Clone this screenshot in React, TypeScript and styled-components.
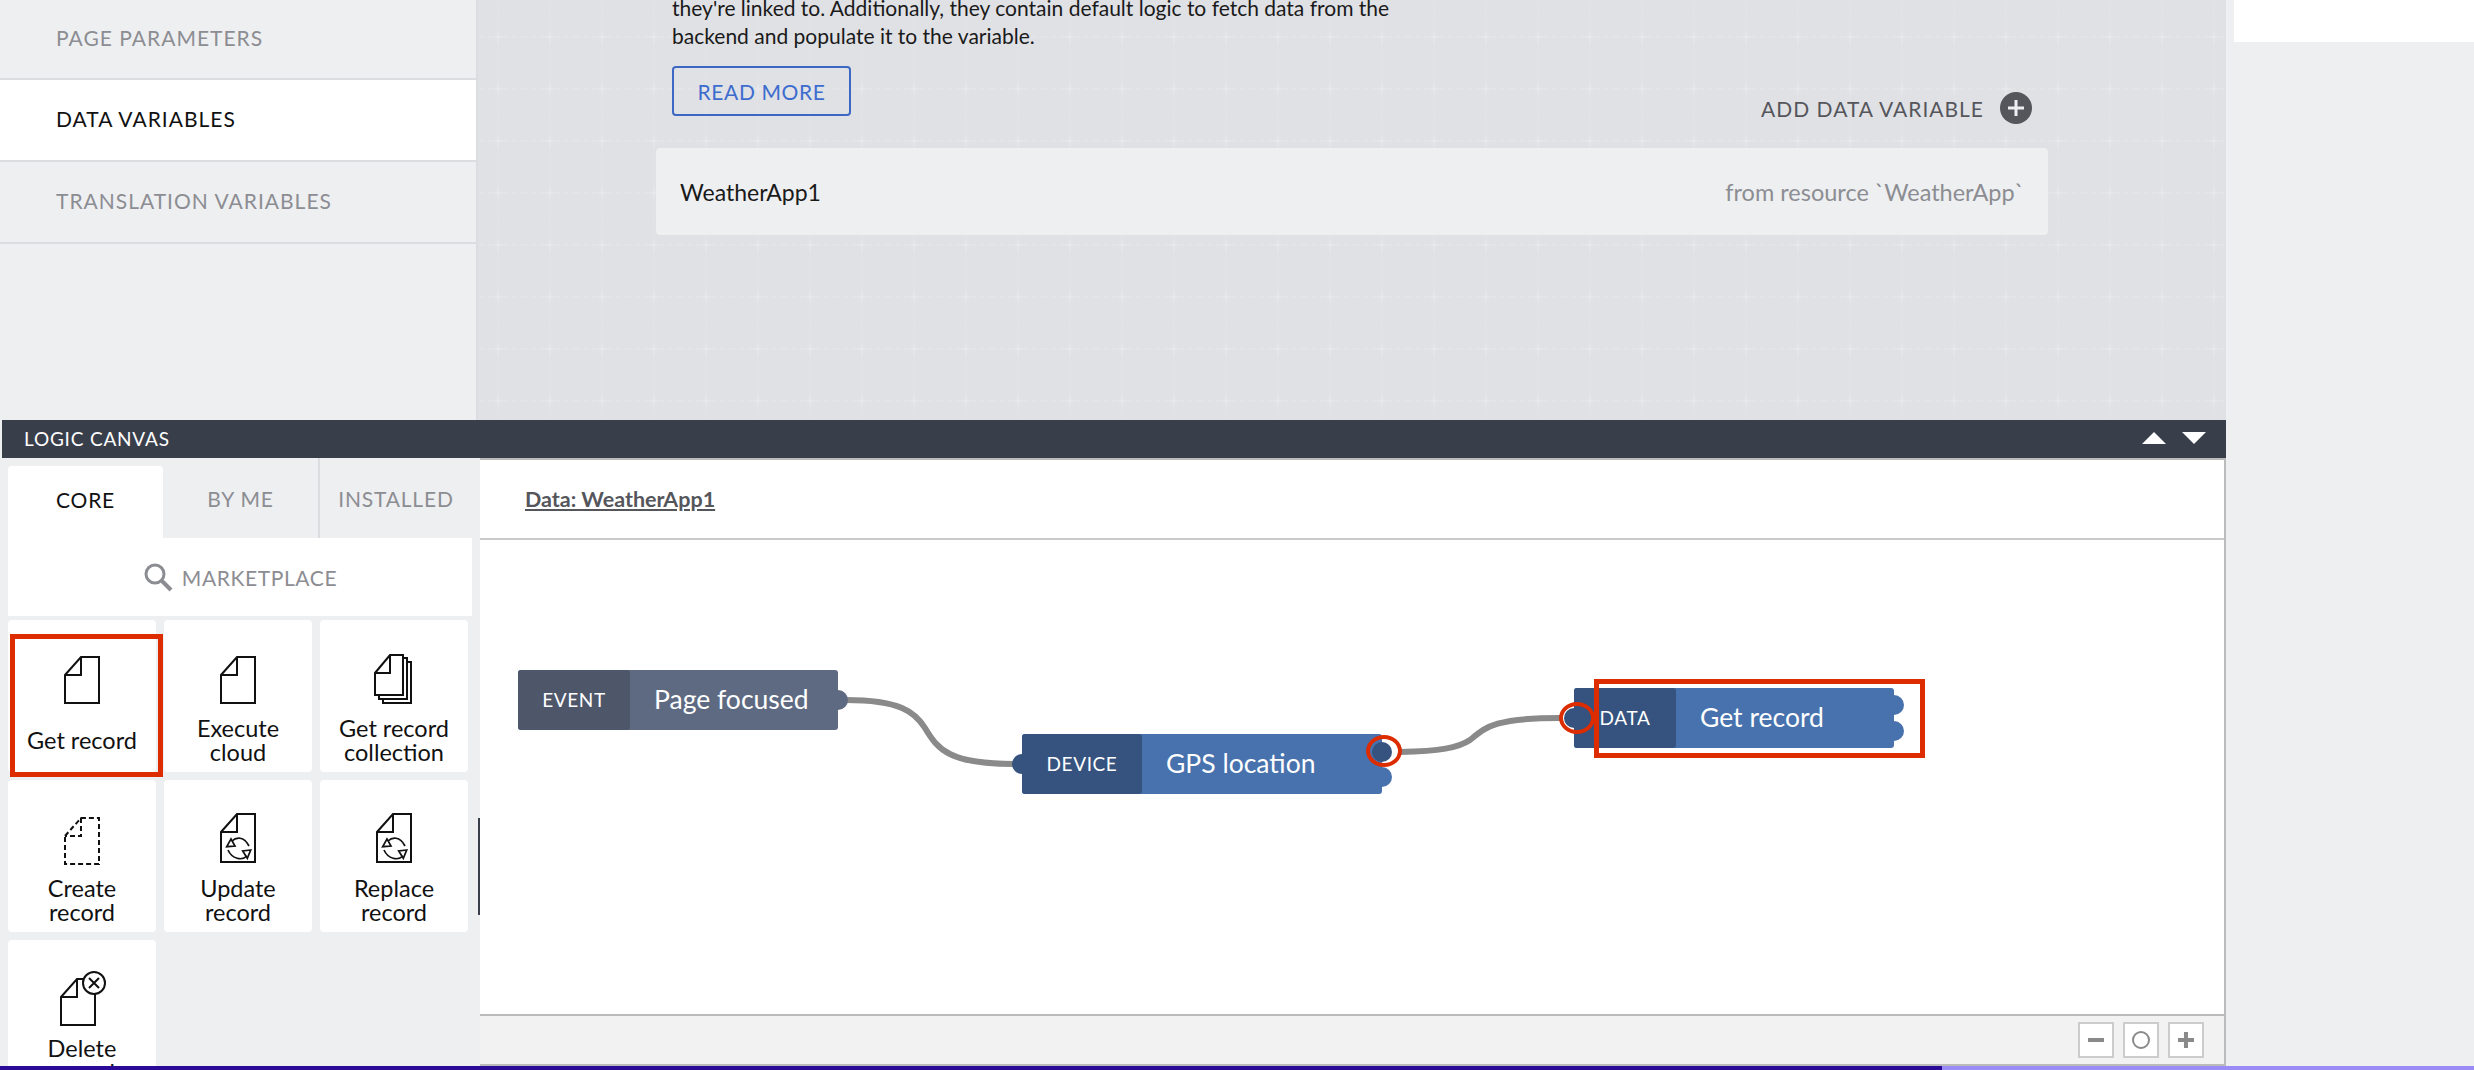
import React from 'react';
import styled, { createGlobalStyle } from 'styled-components';

const GlobalStyle = createGlobalStyle`
  html, body {
    margin: 0;
    padding: 0;
    background: #eeeff1;
    font-family: Lato, "Open Sans", sans-serif;
    overflow: hidden;
  }
`;

const gridTile = encodeURIComponent(
  `<svg xmlns="http://www.w3.org/2000/svg" width="52" height="52">
    <path d="M0 26H52" stroke="#fff" stroke-opacity=".09" stroke-width="2" stroke-dasharray="4 4"/>
    <path d="M26 0V52" stroke="#fff" stroke-opacity=".05" stroke-width="2" stroke-dasharray="4 4"/>
    <path d="M21 26H31M26 21V31" stroke="#fff" stroke-opacity=".16" stroke-width="2"/>
  </svg>`,
);

const Page = styled.div`
  position: relative;
  width: 2474px;
  height: 1070px;
  overflow: hidden;
  display: grid;
  grid-template-columns: 2226px 248px;
  background: #eeeff1;
`;

const Main = styled.div`
  display: flex;
  flex-direction: column;
  height: 1066px;
`;

const Top = styled.div`
  display: flex;
  height: 420px;
  flex: none;
`;

const Sidebar = styled.nav`
  width: 476px;
  flex: none;
  border-right: 2px solid #dcdde0;
  background: #eeeff1;
`;

const SideRow = styled.div<{ $active?: boolean; $h: number }>`
  height: ${p => p.$h}px;
  box-sizing: border-box;
  display: flex;
  align-items: center;
  padding: 0 0 3px 56px;
  border-bottom: 2px solid #dcdde0;
  background: ${p => (p.$active ? '#fff' : 'transparent')};
  color: ${p => (p.$active ? '#111' : '#8c8d92')};
  font-size: 21px;
  letter-spacing: 1px;
`;

const Grid = styled.section`
  flex: 1;
  background-color: #e0e1e5;
  background-image: url("data:image/svg+xml,${gridTile}");
  background-size: 52px 52px;
  background-position: -6px 11px;
  padding-left: 178px;
  overflow: hidden;
`;

const GridInner = styled.div`
  width: 1392px;
  margin-top: -6px;
`;

const Intro = styled.div`
  display: flex;
  justify-content: space-between;
  align-items: flex-end;
  padding: 0 16px;
  height: 130px;
  margin-bottom: 24px;
`;

const Para = styled.p`
  margin: 0;
  width: 740px;
  font-size: 21px;
  line-height: 28px;
  color: #1a1a1a;
`;

const ReadMore = styled.button`
  display: block;
  margin: 16px 0 8px;
  width: 179px;
  height: 50px;
  padding: 0;
  border: 2px solid #3c68c4;
  border-radius: 4px;
  background: transparent;
  color: #3d6ccf;
  font: inherit;
  font-size: 21px;
  letter-spacing: 0.6px;
`;

const AddVar = styled.div`
  display: flex;
  align-items: center;
  gap: 16px;
  color: #55565c;
  font-size: 21px;
  letter-spacing: 1px;
`;

const AddDot = styled.span`
  width: 32px;
  height: 32px;
  border-radius: 50%;
  background: #55565c;
  display: flex;
  align-items: center;
  justify-content: center;
`;

const VarCard = styled.div`
  height: 87px;
  display: flex;
  align-items: center;
  justify-content: space-between;
  padding: 0 24px;
  border-radius: 4px;
  background: #eeeff1;
  font-size: 23px;
  color: #1a1a1a;
`;

const VarSource = styled.span`
  color: #8c8d92;
  font-size: 23.5px;
`;

const Logic = styled.div`
  flex: 1;
  display: flex;
  flex-direction: column;
  min-height: 0;
  padding-left: 2px;
`;

const LogicBar = styled.div`
  height: 38px;
  box-sizing: border-box;
  flex: none;
  display: flex;
  align-items: center;
  justify-content: space-between;
  padding: 0 20px 2px 22px;
  background: #393e4b;
  color: #fff;
  font-size: 19px;
  letter-spacing: 0.8px;
`;

const Arrows = styled.div`
  display: flex;
  gap: 16px;
`;

const Arrow = styled.span<{ $down?: boolean }>`
  width: 0;
  height: 0;
  border-left: 12px solid transparent;
  border-right: 12px solid transparent;
  ${p => (p.$down ? 'border-top: 12px solid #fff;' : 'border-bottom: 12px solid #fff;')}
`;

const LogicBody = styled.div`
  flex: 1;
  display: flex;
  min-height: 0;
  margin-left: -2px;
`;

const Palette = styled.aside`
  position: relative;
  width: 480px;
  flex: none;
  background: #eeeff1;
  overflow: hidden;
`;

const Tabs = styled.div`
  display: grid;
  grid-template-columns: 155px 155px 2px 152px;
  height: 80px;
  margin-left: 8px;
`;

const Tab = styled.div<{ $active?: boolean }>`
  margin-top: ${p => (p.$active ? '8px' : '0')};
  display: flex;
  align-items: center;
  justify-content: center;
  padding-bottom: ${p => (p.$active ? '6px' : '0')};
  border-radius: 4px 4px 0 0;
  background: ${p => (p.$active ? '#fff' : 'transparent')};
  color: ${p => (p.$active ? '#111' : '#8c8d92')};
  font-size: 21px;
  letter-spacing: 0.8px;
`;

const TabDivider = styled.span`
  background: #dcdde0;
`;

const Market = styled.div`
  margin-left: 8px;
  width: 464px;
  height: 78px;
  background: #fff;
  display: flex;
  align-items: center;
  justify-content: center;
  gap: 9px;
  color: #8c8d92;
  font-size: 21px;
  letter-spacing: 0.6px;
`;

const Items = styled.div`
  display: grid;
  grid-template-columns: repeat(3, 148px);
  grid-auto-rows: 152px;
  gap: 8px;
  padding: 4px 0 0 8px;
`;

const Item = styled.div`
  display: flex;
  flex-direction: column;
  align-items: center;
  padding-top: 36px;
  border-radius: 4px;
  background: #fff;
`;

const ItemIcon = styled.svg`
  width: 60px;
  height: 48px;
  flex: none;
  overflow: visible;
  fill: none;
  stroke: #111;
  stroke-width: 2;
`;

const ItemLabel = styled.div`
  margin-top: 12px;
  width: 128px;
  min-height: 48px;
  display: flex;
  align-items: center;
  justify-content: center;
  text-align: center;
  font-size: 23.5px;
  line-height: 24px;
  color: #111;
`;

const ScrollThumb = styled.span`
  position: absolute;
  right: 0;
  top: 360px;
  width: 2px;
  height: 97px;
  background: #393e4b;
`;

const Board = styled.div`
  flex: 1;
  display: flex;
  flex-direction: column;
  border-right: 2px solid #bbb;
  border-top: 2px solid #bbb;
  min-width: 0;
`;

const BoardHead = styled.div`
  height: 78px;
  flex: none;
  display: flex;
  align-items: center;
  padding: 0 0 0 45px;
  background: #fff;
  border-bottom: 2px solid #c9c9c9;
  font-size: 21.5px;
  font-weight: 700;
  color: #55565c;
  text-decoration: underline;
`;

const BoardCanvas = styled.div`
  position: relative;
  flex: 1;
  background: #fff;
`;

const Wires = styled.svg`
  position: absolute;
  left: 0;
  top: 0;
  width: 100%;
  height: 100%;
  fill: none;
  stroke: #8a8a8a;
  stroke-width: 6;
`;

const Node = styled.div<{ $x: number; $y: number; $bg: string }>`
  position: absolute;
  left: ${p => p.$x}px;
  top: ${p => p.$y}px;
  height: 60px;
  display: flex;
  border-radius: 3px;
  background: ${p => p.$bg};
  color: #fff;
`;

const NodeKind = styled.div<{ $bg: string; $w: number }>`
  width: ${p => p.$w}px;
  display: flex;
  align-items: center;
  justify-content: center;
  padding-bottom: 2px;
  box-sizing: border-box;
  border-radius: 3px;
  background: ${p => p.$bg};
  font-size: 19px;
  letter-spacing: 0.6px;
`;

const NodeName = styled.div<{ $w: number }>`
  width: ${p => p.$w}px;
  box-sizing: border-box;
  display: flex;
  align-items: center;
  padding: 0 0 2px 24px;
  font-size: 26.5px;
`;

const Port = styled.span<{ $side: 'left' | 'right'; $y: number; $bg: string }>`
  position: absolute;
  ${p => p.$side}: -10px;
  top: ${p => p.$y - 10}px;
  width: 20px;
  height: 20px;
  border-radius: 50%;
  background: ${p => p.$bg};
`;

const RedBox = styled.div<{ $x: number; $y: number; $w: number; $h: number }>`
  position: absolute;
  left: ${p => p.$x}px;
  top: ${p => p.$y}px;
  width: ${p => p.$w}px;
  height: ${p => p.$h}px;
  box-sizing: border-box;
  border: 5px solid #dd2c00;
  z-index: 3;
`;

const RedRing = styled.div<{ $x: number; $y: number }>`
  position: absolute;
  left: ${p => p.$x - 18}px;
  top: ${p => p.$y - 16}px;
  width: 36px;
  height: 32px;
  box-sizing: border-box;
  border: 4px solid #dd2c00;
  border-radius: 50%;
  z-index: 3;
`;

const BoardFoot = styled.div`
  height: 48px;
  flex: none;
  display: flex;
  align-items: center;
  justify-content: flex-end;
  gap: 9px;
  padding-right: 20px;
  background: #f2f2f2;
  border-top: 2px solid #bbb;
  border-bottom: 2px solid #bbb;
`;

const ZoomBtn = styled.div`
  width: 36px;
  height: 36px;
  box-sizing: border-box;
  border: 2px solid #ccc;
  background: #fff;
  display: flex;
  align-items: center;
  justify-content: center;
`;

const Side = styled.aside`
  background: #eeeff1;
  padding-left: 8px;
`;

const SideWhite = styled.div`
  height: 42px;
  background: #fff;
`;

const Progress = styled.div`
  position: absolute;
  left: 0;
  right: 0;
  bottom: 0;
  height: 4px;
  background: #9a8cf6;
`;

const ProgressFill = styled.div`
  width: 1942px;
  height: 100%;
  background: #2a0a96;
`;

const Doc = () => (
  <>
    <path d="M13 19 29 1H47V47H13Z" />
    <path d="M29 1V19H13" />
  </>
);

const icons: Record<string, React.ReactNode> = {
  get: <Doc />,
  collection: (
    <>
      <path d="M11 17 26-1H39V39H11Z" />
      <path d="M26-1V17H11" />
      <path d="M39 2H43V43H15V39" />
      <path d="M43 6H47V47H19V43" />
    </>
  ),
  create: (
    <g strokeDasharray="5 3" transform="translate(0 1)">
      <Doc />
    </g>
  ),
  sync: (
    <g transform="translate(0 -3)">
      <path d="M13 19 29 1H47V49H13Z" />
      <path d="M29 1V19H13" />
      <g strokeWidth="1.7">
        <path d="M24 28C28 24 36 23 41 33" />
        <path d="M20 37C24 46 34 48 39 43" />
        <path d="M18.7 33.7 23 26 27 33Z" />
        <path d="M42.7 37 34.7 38 39.3 45.3Z" />
      </g>
    </g>
  ),
  remove: (
    <g transform="translate(-4 2)">
      <Doc />
      <circle cx="46" cy="5" r="11" fill="#fff" />
      <path d="M41 0 51 10M51 0 41 10" />
    </g>
  ),
};

const items = [
  { label: 'Get record', icon: 'get' },
  { label: 'Execute cloud', icon: 'get' },
  { label: 'Get record collection', icon: 'collection' },
  { label: 'Create record', icon: 'create' },
  { label: 'Update record', icon: 'sync' },
  { label: 'Replace record', icon: 'sync' },
  { label: 'Delete record', icon: 'remove' },
];

export default function App() {
  return (
    <Page>
      <GlobalStyle />
      <Main>
        <Top>
          <Sidebar>
            <SideRow $h={80}>PAGE PARAMETERS</SideRow>
            <SideRow $h={82} $active>DATA VARIABLES</SideRow>
            <SideRow $h={82}>TRANSLATION VARIABLES</SideRow>
          </Sidebar>
          <Grid>
            <GridInner>
              <Intro>
                <div>
                  <Para>
                    they're linked to. Additionally, they contain default logic to fetch data from the
                    backend and populate it to the variable.
                  </Para>
                  <ReadMore>READ MORE</ReadMore>
                </div>
                <AddVar>
                  ADD DATA VARIABLE
                  <AddDot>
                    <svg width="18" height="18" viewBox="0 0 18 18">
                      <path d="M9 1V17M1 9H17" stroke="#eeeff1" strokeWidth="3" />
                    </svg>
                  </AddDot>
                </AddVar>
              </Intro>
              <VarCard>
                WeatherApp1
                <VarSource>from resource `WeatherApp`</VarSource>
              </VarCard>
            </GridInner>
          </Grid>
        </Top>
        <Logic>
          <LogicBar>
            LOGIC CANVAS
            <Arrows>
              <Arrow />
              <Arrow $down />
            </Arrows>
          </LogicBar>
          <LogicBody>
            <Palette>
              <Tabs>
                <Tab $active>CORE</Tab>
                <Tab>BY ME</Tab>
                <TabDivider />
                <Tab>INSTALLED</Tab>
              </Tabs>
              <Market>
                <svg width="30" height="30" viewBox="0 0 30 30" fill="none" stroke="#8c8d92">
                  <circle cx="12" cy="12" r="9" strokeWidth="3" />
                  <path d="M18 18 28 28" strokeWidth="4" />
                </svg>
                MARKETPLACE
              </Market>
              <Items>
                {items.map(item => (
                  <Item key={item.label}>
                    <ItemIcon viewBox="0 0 60 48">{icons[item.icon]}</ItemIcon>
                    <ItemLabel>{item.label}</ItemLabel>
                  </Item>
                ))}
              </Items>
              <ScrollThumb />
            </Palette>
            <Board>
              <BoardHead>Data: WeatherApp1</BoardHead>
              <BoardCanvas>
                <Wires>
                  <path d="M366 160C420 160 435 172 445 188C458 210 470 224 534 224" />
                  <path d="M920 212C960 211 978 208 990 200C1005 188 1012 178 1080 178" />
                </Wires>
                <Node $x={38} $y={130} $bg="#5e6a82">
                  <NodeKind $bg="#4e566a" $w={112}>EVENT</NodeKind>
                  <NodeName $w={208}>Page focused</NodeName>
                  <Port $side="right" $y={30} $bg="#5e6a82" />
                </Node>
                <Node $x={542} $y={194} $bg="#4872ad">
                  <NodeKind $bg="#35537e" $w={120}>DEVICE</NodeKind>
                  <NodeName $w={240}>GPS location</NodeName>
                  <Port $side="left" $y={30} $bg="#35537e" />
                  <Port $side="right" $y={18} $bg="#35537e" />
                  <Port $side="right" $y={43} $bg="#4872ad" />
                </Node>
                <Node $x={1094} $y={148} $bg="#4872ad">
                  <NodeKind $bg="#35537e" $w={102}>DATA</NodeKind>
                  <NodeName $w={218}>Get record</NodeName>
                  <Port $side="left" $y={30} $bg="#35537e" />
                  <Port $side="right" $y={17} $bg="#4872ad" />
                  <Port $side="right" $y={43} $bg="#4872ad" />
                </Node>
                <RedRing $x={904} $y={211} />
                <RedRing $x={1097} $y={178} />
                <RedBox $x={1114} $y={139} $w={331} $h={79} />
              </BoardCanvas>
              <BoardFoot>
                <ZoomBtn>
                  <svg width="18" height="18" viewBox="0 0 18 18"><path d="M1 9H17" stroke="#8a8a8a" strokeWidth="4" /></svg>
                </ZoomBtn>
                <ZoomBtn>
                  <svg width="20" height="20" viewBox="0 0 20 20"><circle cx="10" cy="10" r="8" fill="none" stroke="#8a8a8a" strokeWidth="2" /></svg>
                </ZoomBtn>
                <ZoomBtn>
                  <svg width="18" height="18" viewBox="0 0 18 18"><path d="M1 9H17M9 1V17" stroke="#8a8a8a" strokeWidth="4" /></svg>
                </ZoomBtn>
              </BoardFoot>
            </Board>
          </LogicBody>
        </Logic>
      </Main>
      <Side>
        <SideWhite />
      </Side>
      <RedBox $x={10} $y={634} $w={153} $h={143} />
      <Progress>
        <ProgressFill />
      </Progress>
    </Page>
  );
}
